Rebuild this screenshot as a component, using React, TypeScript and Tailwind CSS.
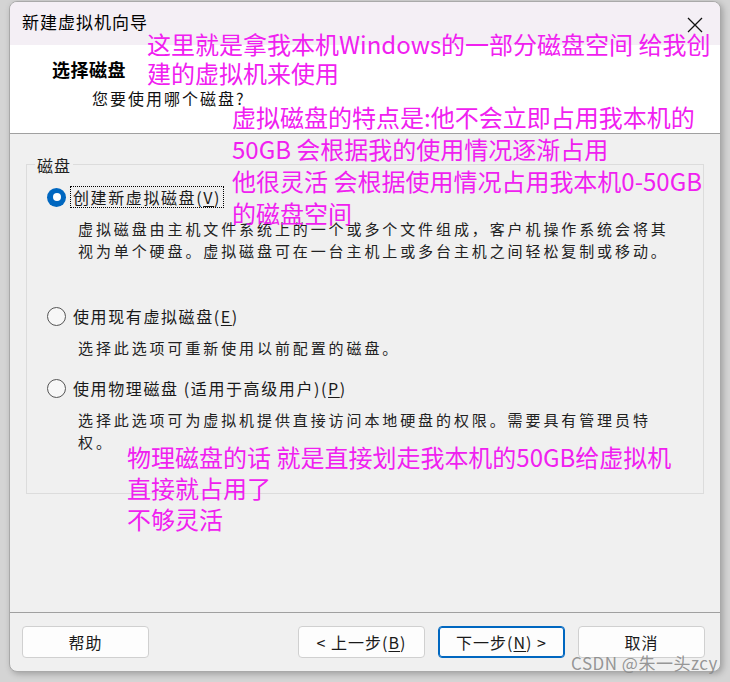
import React from "react";

const uiFont = { fontFamily: '"Noto Sans CJK SC", "Noto Sans", sans-serif' };

function Radio({ checked }: { checked?: boolean }) {
  if (checked) {
    return (
      <span className="w-[19px] h-[19px] rounded-full bg-[#0067c0] flex items-center justify-center shrink-0">
        <span className="w-[8px] h-[8px] rounded-full bg-white" />
      </span>
    );
  }
  return <span className="w-[19px] h-[19px] rounded-full border border-[#555] bg-[#f7f7f7] shrink-0" />;
}

function Option({
  checked,
  label,
  mnemonic,
  focus,
  children,
}: {
  checked?: boolean;
  label: string;
  mnemonic: string;
  focus?: boolean;
  children: React.ReactNode;
}) {
  return (
    <div className="flex flex-col">
      <div className="flex items-center h-[22px] pl-[20px]">
        <Radio checked={checked} />
        <span
          className={
            "ml-[4px] h-[22px] flex items-center px-[2px] text-[16px] tracking-[1.6px] text-[#1a1a1a] " +
            (focus ? "border border-dotted border-black" : "border border-transparent")
          }
        >
          {label}(<span className="underline underline-offset-2">{mnemonic}</span>)
        </span>
      </div>
      <div className="pl-[51px] pr-[20px] mt-[10px] text-[15px] leading-[22px] tracking-[2.9px] text-[#222]">
        {children}
      </div>
    </div>
  );
}

function Btn({ children, primary }: { children: React.ReactNode; primary?: boolean }) {
  return (
    <button
      className={
        "w-[127px] h-[32px] rounded-[4px] bg-[#fdfdfd] text-[16px] tracking-[1px] text-[#1a1a1a] flex items-center justify-center " +
        (primary ? "border border-[#0067c0] shadow-[inset_0_0_0_1px_#0067c0]" : "border border-[#d0d0d0]")
      }
    >
      {children}
    </button>
  );
}

export default function App() {
  return (
    <div className="w-[730px] h-[682px] bg-[#d4d4d4] relative overflow-hidden pl-[9px] pt-[1px]" style={uiFont}>
      <div className="w-[712px] h-[671px] rounded-[8px] border border-[#a9a9a9] overflow-hidden flex flex-col bg-[#f0f0f0] shadow-[2px_2px_6px_rgba(0,0,0,0.25)]">
        {/* title bar */}
        <div className="h-[43px] shrink-0 bg-[#f4eff5] flex items-center justify-between pl-[12px] pr-[17px]">
          <span className="text-[17px] tracking-[1px] text-black -mt-[4px]">新建虚拟机向导</span>
          <svg width="16" height="16" viewBox="0 0 16 16" className="mt-[2px]">
            <path d="M1 1 L15 15 M15 1 L1 15" stroke="#111" strokeWidth="1.3" />
          </svg>
        </div>

        {/* header */}
        <div className="h-[89px] shrink-0 bg-white border-b border-[#a0a0a0] pl-[42px] pt-[12px]">
          <div className="text-[18px] font-bold leading-[24px] tracking-[0.5px] text-black">选择磁盘</div>
          <div className="ml-[40px] mt-[5px] text-[16px] leading-[24px] tracking-[2px] text-[#111]">您要使用哪个磁盘?</div>
        </div>

        {/* body */}
        <div className="flex-1 px-[16px] pt-[30px]">
          <div className="relative border border-[#dcdcdc] h-[330px] pt-[21px]">
            <span className="absolute -top-[12px] left-[8px] bg-[#f0f0f0] px-[2px] text-[16px] tracking-[1px] text-[#222]">
              磁盘
            </span>
            <Option checked focus label="创建新虚拟磁盘" mnemonic="V">
              虚拟磁盘由主机文件系统上的一个或多个文件组成，客户机操作系统会将其视为单个硬盘。虚拟磁盘可在一台主机上或多台主机之间轻松复制或移动。
            </Option>
            <div className="h-[43px]" />
            <Option label="使用现有虚拟磁盘" mnemonic="E">
              选择此选项可重新使用以前配置的磁盘。
            </Option>
            <div className="h-[18px]" />
            <Option label="使用物理磁盘 (适用于高级用户)" mnemonic="P">
              选择此选项可为虚拟机提供直接访问本地硬盘的权限。需要具有管理员特权。
            </Option>
          </div>
        </div>

        {/* footer */}
        <div className="h-[59px] shrink-0 border-t border-[#a0a0a0] flex items-start pt-[13px] pl-[12px] pr-[15px]">
          <Btn>帮助</Btn>
          <div className="flex-1" />
          <div className="flex gap-[13px]">
            <Btn>
              &lt;&nbsp;上一步(<span className="underline underline-offset-2">B</span>)
            </Btn>
            <Btn primary>
              下一步(<span className="underline underline-offset-2">N</span>)&nbsp;&gt;
            </Btn>
            <Btn>取消</Btn>
          </div>
        </div>
      </div>

      {/* annotations */}
      <div className="absolute left-[147px] top-[29px] text-[24px] leading-[29px] text-[#f020f0] whitespace-nowrap">
        <div>这里就是拿我本机Windows的一部分磁盘空间 给我创</div>
        <div>建的虚拟机来使用</div>
      </div>
      <div className="absolute left-[232px] top-[101px] text-[24px] leading-[32px] text-[#f020f0] whitespace-nowrap">
        <div>虚拟磁盘的特点是:他不会立即占用我本机的</div>
        <div>50GB 会根据我的使用情况逐渐占用</div>
        <div>他很灵活 会根据使用情况占用我本机0-50GB</div>
        <div>的磁盘空间</div>
      </div>
      <div className="absolute left-[127px] top-[441px] text-[24px] leading-[31px] text-[#f020f0] whitespace-nowrap">
        <div>物理磁盘的话 就是直接划走我本机的50GB给虚拟机</div>
        <div>直接就占用了</div>
        <div>不够灵活</div>
      </div>

      <div className="absolute left-[571px] top-[652px] text-[17px] leading-[22px] tracking-[0.5px] text-[#8a8a8a]/90 whitespace-nowrap">
        CSDN @朱一头zcy
      </div>
    </div>
  );
}
